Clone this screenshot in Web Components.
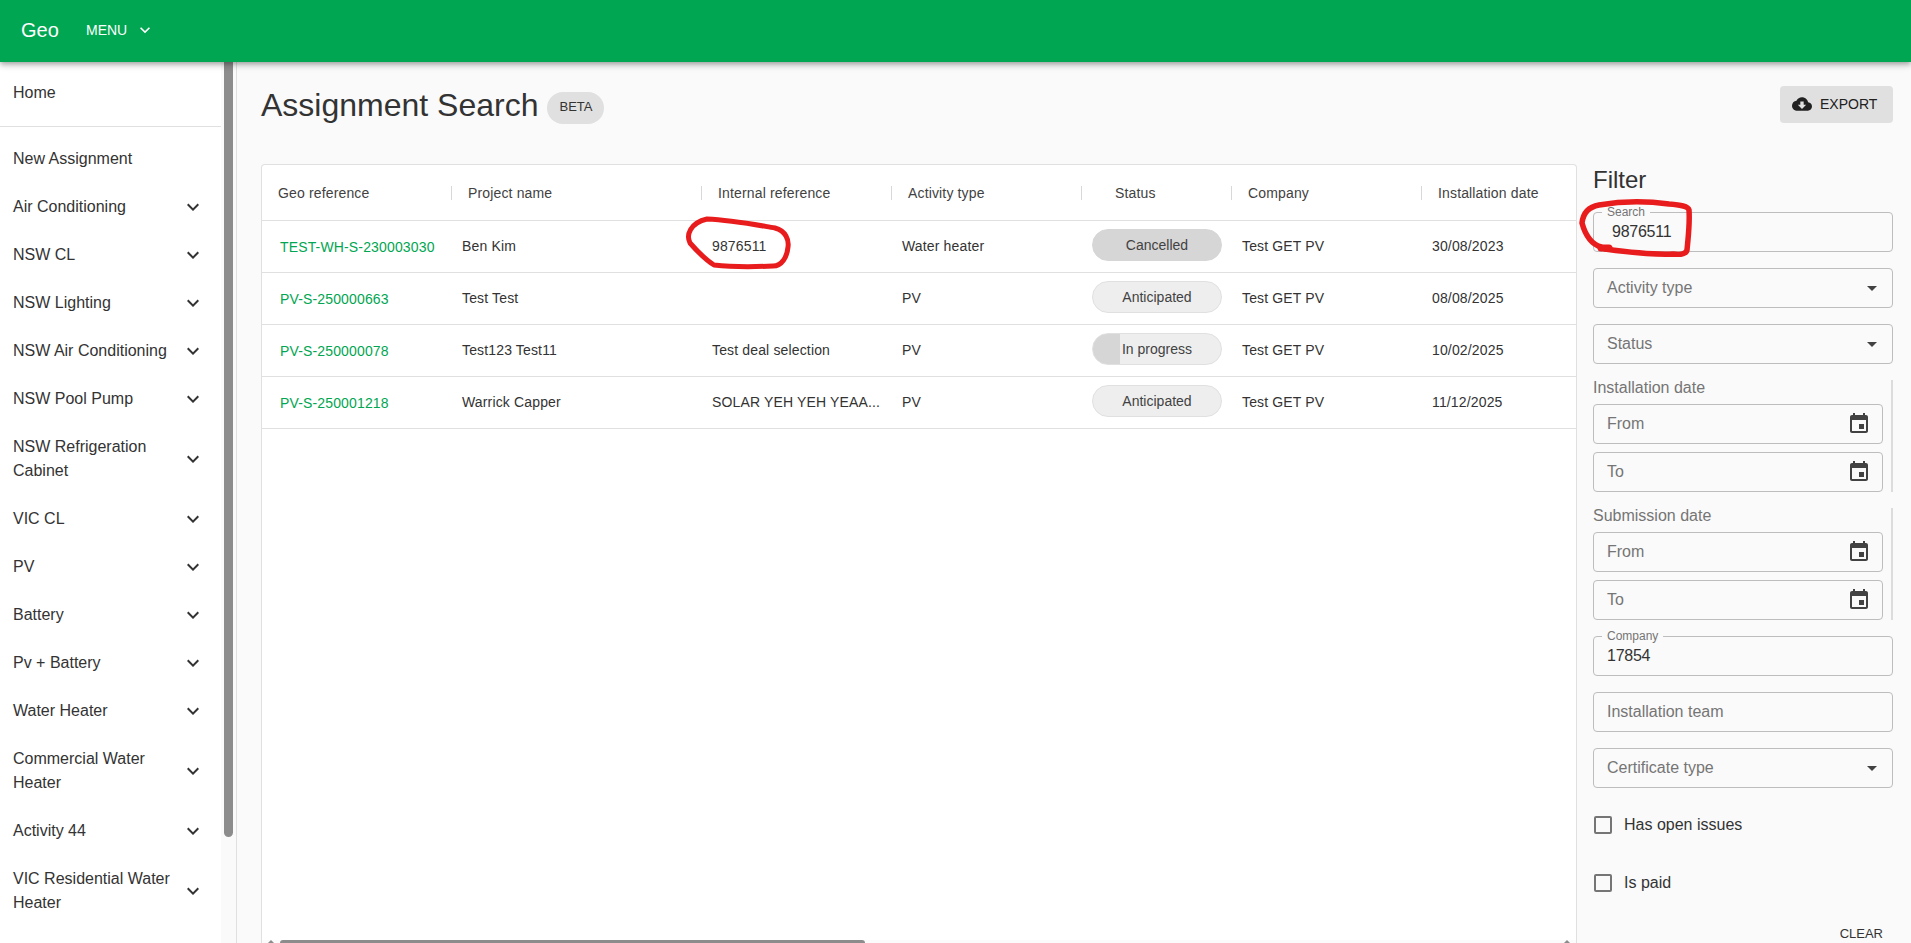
<!DOCTYPE html>
<html>
<head>
<meta charset="utf-8">
<title>Assignment Search</title>
<style>
  html, body { margin: 0; height: 100%; overflow: hidden; }
  body {
    font-family: "Liberation Sans", Arial, sans-serif;
    color: #333;
    background: #fafafa;
  }
</style>
</head>
<body>
<geo-app>
  <geo-app-bar slot="bar"></geo-app-bar>
  <geo-sidebar slot="side">
    <nav-item plain>Home</nav-item>
    <nav-rule></nav-rule>
    <nav-item plain>New Assignment</nav-item>
    <nav-item>Air Conditioning</nav-item>
    <nav-item>NSW CL</nav-item>
    <nav-item>NSW Lighting</nav-item>
    <nav-item>NSW Air Conditioning</nav-item>
    <nav-item>NSW Pool Pump</nav-item>
    <nav-item>NSW Refrigeration Cabinet</nav-item>
    <nav-item>VIC CL</nav-item>
    <nav-item>PV</nav-item>
    <nav-item>Battery</nav-item>
    <nav-item>Pv + Battery</nav-item>
    <nav-item>Water Heater</nav-item>
    <nav-item>Commercial Water Heater</nav-item>
    <nav-item>Activity 44</nav-item>
    <nav-item>VIC Residential Water Heater</nav-item>
  </geo-sidebar>
  <page-head slot="head"></page-head>
  <assignment-table slot="table"></assignment-table>
  <filter-panel slot="filter"></filter-panel>
</geo-app>

<script>
const ICONS = {
  more: 'M16.59 8.59L12 13.17 7.41 8.59 6 10l6 6 6-6z',
  drop: 'M7 10l5 5 5-5z',
  event: 'M17 12h-5v5h5v-5zM16 1v2H8V1H6v2H5c-1.11 0-1.99.9-1.99 2L3 19c0 1.1.89 2 2 2h14c1.1 0 2-.9 2-2V5c0-1.1-.9-2-2-2h-1V1h-2zm3 18H5V8h14v11z',
  cloud: 'M19.35 10.04C18.67 6.59 15.64 4 12 4 9.11 4 6.6 5.64 5.35 8.04 2.34 8.36 0 10.91 0 14c0 3.31 2.69 6 6 6h13c2.76 0 5-2.24 5-5 0-2.64-2.05-4.78-4.65-4.96zM17 13l-5 5-5-5h3V9h4v4h3z'
}

function icon(name, size) {
  return `<svg width="${size}" height="${size}" viewBox="0 0 24 24" fill="currentColor"><path d="${ICONS[name]}"></path></svg>`
}

class GeoApp extends HTMLElement {
  constructor() {
    super()
    this.attachShadow({ mode: "open" })
    this.shadowRoot.innerHTML = /*html */`
      <style>
        :host { display: flex; flex-direction: column; height: 943px; overflow: hidden; }
        .body { flex: 1; display: flex; min-height: 0; }
        main { flex: 1; min-width: 0; display: flex; flex-direction: column; padding: 0 18px 0 24px; }
        .work { flex: 1; display: flex; min-height: 0; }
      </style>
      <slot name="bar"></slot>
      <div class="body">
        <slot name="side"></slot>
        <main>
          <slot name="head"></slot>
          <div class="work">
            <slot name="table"></slot>
            <slot name="filter"></slot>
          </div>
        </main>
      </div>
    `
  }
}

class GeoAppBar extends HTMLElement {
  constructor() {
    super()
    this.attachShadow({ mode: "open" })
    this.shadowRoot.innerHTML = /*html */`
      <style>
        :host {
          display: flex;
          align-items: center;
          position: relative;
          z-index: 2;
          height: 62px;
          flex: none;
          padding: 0 0 2px 21px;
          box-sizing: border-box;
          background: #00a651;
          color: #fff;
          box-shadow: 0 2px 4px -1px rgba(0,0,0,.2), 0 4px 5px 0 rgba(0,0,0,.14), 0 1px 10px 0 rgba(0,0,0,.12);
        }
        .logo { font-size: 20px; width: 66px; }
        .menu { font-size: 14px; display: flex; align-items: center; gap: 8px; margin-left: -1px; }
        svg { display: block; }
      </style>
      <span class="logo">Geo</span>
      <span class="menu">MENU ${icon('more', 20)}</span>
    `
  }
}

class GeoSidebar extends HTMLElement {
  constructor() {
    super()
    this.attachShadow({ mode: "open" })
    this.shadowRoot.innerHTML = /*html */`
      <style>
        :host {
          display: block;
          position: relative;
          flex: none;
          width: 237px;
          box-sizing: border-box;
          border-right: 1px solid #e0e0e0;
          background: #fafafa;
          overflow: hidden;
        }
        .list { width: 221px; height: 100%; background: #fff; padding-top: 7px; box-sizing: border-box; }
        .thumb {
          position: absolute;
          top: 0;
          left: 224px;
          width: 9px;
          height: 775px;
          background: #8c8c8c;
          border-radius: 0 0 5px 5px;
        }
      </style>
      <div class="list"><slot></slot></div>
      <div class="thumb"></div>
    `
  }
}

class NavItem extends HTMLElement {
  constructor() {
    super()
    this.attachShadow({ mode: "open" })
    this.shadowRoot.innerHTML = /*html */`
      <style>
        :host {
          display: flex;
          align-items: center;
          justify-content: space-between;
          box-sizing: border-box;
          min-height: 48px;
          padding: 12px 16px 12px 13px;
          font-size: 16px;
          line-height: 24px;
          color: #333;
        }
        svg { display: block; flex: none; margin-left: 8px; }
        .label { flex: 1; }
      </style>
      <span class="label"><slot></slot></span>
      ${this.hasAttribute('plain') ? '' : icon('more', 24)}
    `
  }
}

class NavRule extends HTMLElement {
  constructor() {
    super()
    this.attachShadow({ mode: "open" })
    this.shadowRoot.innerHTML = /*html */`
      <style>
        :host { display: block; height: 1px; background: #e0e0e0; margin: 9px 0 8px; }
      </style>
    `
  }
}

class PageHead extends HTMLElement {
  constructor() {
    super()
    this.attachShadow({ mode: "open" })
    this.shadowRoot.innerHTML = /*html */`
      <style>
        :host { display: flex; justify-content: space-between; align-items: flex-start; height: 102px; flex: none; padding-top: 24px; box-sizing: border-box; }
        .left { display: flex; align-items: flex-start; gap: 9px; }
        h1 { margin: 0; font-size: 32px; font-weight: 400; line-height: 38px; color: #333; }
        .chip {
          margin-top: 6px;
          height: 32px;
          line-height: 30px;
          padding: 0 12px;
          border-radius: 16px;
          background: #e0e0e0;
          font-size: 13px;
          color: #333;
        }
        .export {
          display: flex;
          align-items: center;
          gap: 8px;
          height: 37px;
          width: 113px;
          padding: 0 0 1px 12px;
          box-sizing: border-box;
          border-radius: 4px;
          background: #e0e0e0;
          font-size: 14px;
          color: #212121;
        }
        svg { display: block; }
      </style>
      <div class="left"><h1>Assignment Search</h1><span class="chip">BETA</span></div>
      <div class="export">${icon('cloud', 20)}<span>EXPORT</span></div>
    `
  }
}

class StatusChip extends HTMLElement {
  constructor() {
    super()
    this.attachShadow({ mode: "open" })
    const fill = this.getAttribute('fill') || '0'
    this.shadowRoot.innerHTML = /*html */`
      <style>
        :host {
          display: block;
          width: 130px;
          height: 32px;
          margin-bottom: 1px;
          box-sizing: border-box;
          border: 1px solid #e0e0e0;
          border-radius: 16px;
          line-height: 31px;
          text-align: center;
          font-size: 14px;
          letter-spacing: 0;
          color: #424242;
          background: linear-gradient(90deg, #d6d6d6 ${fill}px, #eeeeee ${fill}px);
        }
        :host([fill="130"]) { border-color: #d6d6d6; }
      </style>
      <slot></slot>
    `
  }
}

const COLUMNS = '184px 250px 190px 190px 150px 190px 1fr'

class AssignmentTable extends HTMLElement {
  constructor() {
    super()
    this.attachShadow({ mode: "open" })
    const heads = ['Geo reference', 'Project name', 'Internal reference', 'Activity type', 'Status', 'Company', 'Installation date']
    const rows = [
      ['TEST-WH-S-230003030', 'Ben Kim', '9876511', 'Water heater', ['Cancelled', 130], 'Test GET PV', '30/08/2023'],
      ['PV-S-250000663', 'Test Test', '', 'PV', ['Anticipated', 0], 'Test GET PV', '08/08/2025'],
      ['PV-S-250000078', 'Test123 Test11', 'Test deal selection', 'PV', ['In progress', 27], 'Test GET PV', '10/02/2025'],
      ['PV-S-250001218', 'Warrick Capper', 'SOLAR YEH YEH YEAA...', 'PV', ['Anticipated', 0], 'Test GET PV', '11/12/2025']
    ]
    const rowHtml = rows.map(r => `
      <div class="row">
        <div class="cell"><span class="ref">${r[0]}</span></div>
        <div class="cell">${r[1]}</div>
        <div class="cell">${r[2]}</div>
        <div class="cell">${r[3]}</div>
        <div class="cell"><status-chip fill="${r[4][1]}">${r[4][0]}</status-chip></div>
        <div class="cell">${r[5]}</div>
        <div class="cell">${r[6]}</div>
      </div>`).join('')
    this.shadowRoot.innerHTML = /*html */`
      <style>
        :host {
          display: block;
          position: relative;
          flex: none;
          width: 1316px;
          box-sizing: border-box;
          border: 1px solid #e0e0e0;
          border-bottom: 0;
          border-radius: 4px 4px 0 0;
          background: #fff;
          font-size: 14px;
          letter-spacing: .15px;
          color: #333;
        }
        .head, .row { display: grid; grid-template-columns: ${COLUMNS}; border-bottom: 1px solid #e0e0e0; box-sizing: border-box; }
        .head { height: 56px; align-items: center; color: #424242; }
        .row { height: 52px; padding-bottom: 2px; align-items: center; }
        .th { position: relative; padding-left: 22px; white-space: nowrap; }
        .th:first-child { padding-left: 16px; }
        .th:nth-child(5) { padding-left: 39px; }
        .th:not(:first-child)::before {
          content: "";
          position: absolute;
          left: 5px;
          top: 1px;
          width: 1px;
          height: 14px;
          background: #d8d8d8;
        }
        .cell { padding-left: 16px; white-space: nowrap; overflow: hidden; }
        .ref { display: block; color: #00a651; padding: 3px 0 0 2px; }
        .track { position: absolute; left: 0; right: 0; bottom: 0; height: 3px; background: #fbfbfb; }
        .thumb { position: absolute; left: 18px; bottom: 0; width: 585px; height: 3px; background: #8c8c8c; border-radius: 3px 3px 0 0; }
        .arrow { position: absolute; bottom: 0; width: 0; height: 0; border-bottom: 3px solid #8c8c8c; border-left: 3px solid transparent; border-right: 3px solid transparent; }
        .a-left { left: 6px; }
        .a-right { right: 6px; }
        .scribble { position: absolute; left: 0; top: 0; overflow: visible; pointer-events: none; }
      </style>
      <div class="head">${heads.map(h => `<div class="th">${h}</div>`).join('')}</div>
      ${rowHtml}
      <svg class="scribble" width="540" height="110" viewBox="0 0 540 110" fill="none">
        <path d="M445 54C470 55 495 60 513 63C524 66 527 75 526 82C525 92 520 101 511 101C490 102 470 102 452 100C444 95 435 86 428 78C424 70 428 58 445 54Z" stroke="#e81c1c" stroke-width="5" stroke-linejoin="round" stroke-linecap="round"></path>
      </svg>
      <div class="track"></div>
      <div class="arrow a-left"></div>
      <div class="thumb"></div>
      <div class="arrow a-right"></div>
    `
  }
}

class FilterField extends HTMLElement {
  constructor() {
    super()
    this.attachShadow({ mode: "open" })
    const kind = this.getAttribute('kind')
    const tail = kind === 'select' ? icon('drop', 24) : kind === 'date' ? icon('event', 24) : ''
    const label = this.getAttribute('label')
    const pad = this.getAttribute('pad') || '13'
    this.shadowRoot.innerHTML = /*html */`
      <style>
        :host {
          display: flex;
          align-items: center;
          justify-content: space-between;
          position: relative;
          height: 40px;
          box-sizing: border-box;
          border: 1px solid #bdbdbd;
          border-radius: 4px;
          padding: 0 ${kind === 'select' ? 8 : 11}px 0 ${pad}px;
          font-size: 16px;
          letter-spacing: ${label ? '-.25px' : '0'};
          color: ${label ? '#333' : '#757575'};
        }
        .notch {
          position: absolute;
          left: 8px;
          top: -7px;
          padding: 0 5px;
          background: #fafafa;
          font-size: 12px;
          line-height: 13px;
          letter-spacing: 0;
          color: #757575;
        }
        svg { display: block; color: #424242; }
      </style>
      ${label ? `<span class="notch">${label}</span>` : ''}
      <span><slot></slot></span>
      ${tail}
    `
  }
}

class DateGroup extends HTMLElement {
  constructor() {
    super()
    this.attachShadow({ mode: "open" })
    this.shadowRoot.innerHTML = /*html */`
      <style>
        :host {
          display: flex;
          flex-direction: column;
          gap: 8px;
          box-sizing: border-box;
          border-right: 2px solid #dcdcdc;
          padding-right: 8px;
        }
        .title { font-size: 16px; line-height: 16px; height: 16px; color: #757575; }
      </style>
      <div class="title">${this.getAttribute('title-text')}</div>
      <slot></slot>
    `
  }
}

class FilterCheck extends HTMLElement {
  constructor() {
    super()
    this.attachShadow({ mode: "open" })
    this.shadowRoot.innerHTML = /*html */`
      <style>
        :host { display: flex; align-items: center; gap: 12px; height: 42px; padding-left: 1px; font-size: 16px; color: #333; }
        .box { width: 18px; height: 18px; box-sizing: border-box; border: 2px solid #757575; border-radius: 2px; }
      </style>
      <span class="box"></span>
      <span><slot></slot></span>
    `
  }
}

class FilterPanel extends HTMLElement {
  constructor() {
    super()
    this.attachShadow({ mode: "open" })
    this.shadowRoot.innerHTML = /*html */`
      <style>
        :host {
          display: flex;
          flex-direction: column;
          gap: 16px;
          position: relative;
          flex: 1;
          min-width: 0;
          padding: 2px 0 0 16px;
          box-sizing: border-box;
        }
        h2 { margin: 0 0 2px; font-size: 24px; font-weight: 400; line-height: 28px; color: #333; }
        .clear { margin-top: 6px; padding-right: 10px; text-align: right; font-size: 13px; line-height: 16px; color: #333; }
        .scribble { position: absolute; left: 0; top: 0; overflow: visible; pointer-events: none; }
      </style>
      <h2>Filter</h2>
      <filter-field label="Search" pad="18">9876511</filter-field>
      <filter-field kind="select">Activity type</filter-field>
      <filter-field kind="select">Status</filter-field>
      <date-group title-text="Installation date">
        <filter-field kind="date">From</filter-field>
        <filter-field kind="date">To</filter-field>
      </date-group>
      <date-group title-text="Submission date">
        <filter-field kind="date">From</filter-field>
        <filter-field kind="date">To</filter-field>
      </date-group>
      <filter-field label="Company">17854</filter-field>
      <filter-field>Installation team</filter-field>
      <filter-field kind="select">Certificate type</filter-field>
      <filter-check>Has open issues</filter-check>
      <filter-check>Is paid</filter-check>
      <div class="clear">CLEAR</div>
      <svg class="scribble" width="130" height="100" viewBox="0 0 130 100" fill="none">
        <path d="M24 83C14 80 8 70 5 59C6 50 11 43 22 41C45 37 70 37 92 40C104 41 111 42 112 46C113 60 111 75 110 86C109 90 104 91 96 90C75 91 50 88 28 85" stroke="#e81c1c" stroke-width="5.5" stroke-linejoin="round" stroke-linecap="round"></path>
        <path d="M24 84L32 84" stroke="#e81c1c" stroke-width="7" stroke-linecap="round"></path>
      </svg>
    `
  }
}

customElements.define('geo-app', GeoApp)
customElements.define('geo-app-bar', GeoAppBar)
customElements.define('geo-sidebar', GeoSidebar)
customElements.define('nav-item', NavItem)
customElements.define('nav-rule', NavRule)
customElements.define('page-head', PageHead)
customElements.define('status-chip', StatusChip)
customElements.define('assignment-table', AssignmentTable)
customElements.define('filter-field', FilterField)
customElements.define('date-group', DateGroup)
customElements.define('filter-check', FilterCheck)
customElements.define('filter-panel', FilterPanel)
</script>
</body>
</html>
